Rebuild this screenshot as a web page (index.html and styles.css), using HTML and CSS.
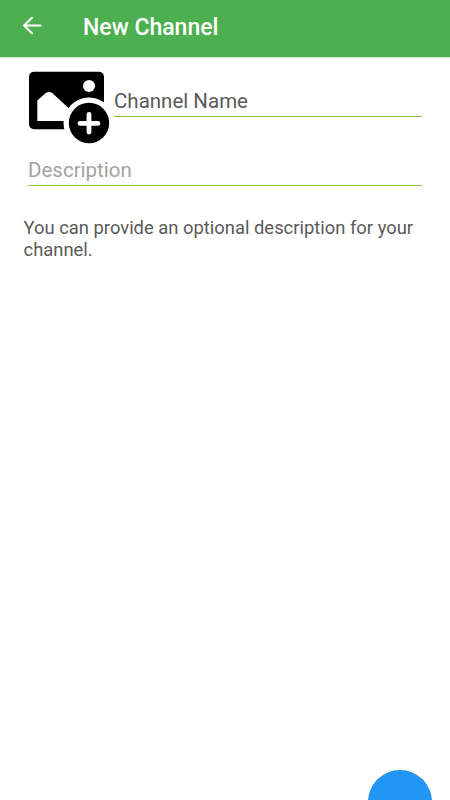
FILE: index.html
```html
<!DOCTYPE html>
<html lang="en">
<head>
<meta charset="utf-8">
<title>New Channel</title>
<link rel="stylesheet" href="styles.css">
</head>
<body>
<header class="bar">
  <svg class="back" width="20" height="20" viewBox="0 0 20 20"><path d="M18.5 9.5H2M10 1.8L2 9.5L10 17.2" fill="none" stroke="#fff" stroke-width="2" stroke-linecap="round" stroke-linejoin="round"/></svg>
  <h1 class="title">New Channel</h1>
</header>
<main class="form">
  <div class="row">
    <svg class="photo" width="82" height="74" viewBox="0 0 82 74">
      <rect x="1" y="1.7" width="75" height="57.5" rx="5"/>
      <path d="M9.3 51V30.5L17.5 23.2Q21 20.8 24.5 23.2L41 38.5L46 51Z" fill="#fff"/>
      <circle cx="61" cy="16" r="6" fill="#fff"/>
      <circle cx="61" cy="53" r="25.5" fill="#fff"/>
      <circle cx="61" cy="53" r="20.2"/>
      <path d="M61 44.5V62M52 53.3H70" stroke="#fff" stroke-width="4.8" stroke-linecap="round"/>
    </svg>
    <div class="field name">Channel Name</div>
  </div>
  <div class="field desc">Description</div>
  <p class="hint">You can provide an optional description for your channel.</p>
</main>
<div class="fab"></div>
</body>
</html>
```
FILE: styles.css
```css
body {
  margin: 0;
  height: 800px;
  position: relative;
  overflow: hidden;
  background: #fff;
  color: #5a5a5a;
  font-family: Roboto, sans-serif;
}
.bar {
  height: 57px;
  box-sizing: border-box;
  padding: 0 0 5px 22px;
  display: flex;
  align-items: center;
  gap: 41px;
  background: #4caf50;
  box-shadow: 0 1px 1px #d5e8d6;
}
.title {
  margin: 0;
  padding-top: 3px;
  color: #fff;
  font-size: 23px;
  font-weight: 500;
  line-height: 30px;
}
.form { padding: 13px 28px 0; }
.row { display: flex; gap: 4px; height: 74px; }
.photo { flex: none; }
.field {
  box-sizing: border-box;
  border-bottom: 1px solid #8bc34a;
  font-size: 20.5px;
  line-height: 24px;
}
.name { flex: 1; height: 47px; padding-top: 19px; }
.desc { height: 42px; padding-top: 14px; color: #a3a3a3; }
.hint {
  margin: 31px -10px 0 -4.5px;
  font-size: 18.4px;
  line-height: 22px;
}
.fab {
  position: absolute;
  left: 368px;
  top: 770px;
  width: 64px;
  height: 64px;
  border-radius: 50%;
  background: #2196f3;
}
```
